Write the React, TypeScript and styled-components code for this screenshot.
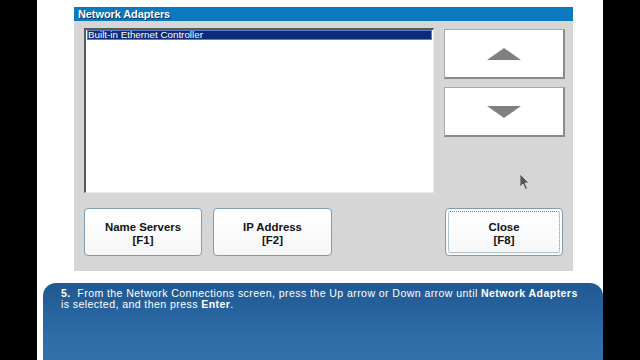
import styled, { createGlobalStyle } from 'styled-components';

const GlobalStyle = createGlobalStyle`
    html, body {
        margin: 0;
        padding: 0;
        background: #000;
        width: 640px;
        height: 360px;
        overflow: hidden;
        font-family: "Liberation Sans", Arial, sans-serif;
    }
`;

const Page = styled.div`
    position: relative;
    margin-left: 37px;
    width: 566px;
    height: 360px;
    background: #fff;
    display: flex;
    flex-direction: column;
`;

const Dialog = styled.div`
    margin: 7px 0 0 37px;
    width: 499px;
    height: 264px;
    background: #d6d6d6;
    display: flex;
    flex-direction: column;
`;

const TitleBar = styled.div`
    height: 14px;
    background: #0b78c0;
    color: #fff;
    font-weight: bold;
    font-size: 11px;
    line-height: 14px;
    padding-left: 4px;
    text-shadow: 1px 1px 0 #0a2a55;
    letter-spacing: -0.1px;
`;

const Body = styled.div`
    display: grid;
    grid-template-columns: 350px 121px;
    grid-template-rows: 165px 48px;
    column-gap: 10px;
    row-gap: 15px;
    padding: 7px 0 0 10px;
`;

const ListBox = styled.div`
    background: #fff;
    border-top: 2px solid #5a5a5a;
    border-left: 2px solid #5a5a5a;
    border-right: 1px solid #e8e8e8;
    border-bottom: 1px solid #e8e8e8;
    padding: 0 1px;
`;

const ListItem = styled.div<{ $selected?: boolean }>`
    height: 8px;
    font-size: 9.8px;
    line-height: 8px;
    padding-left: 0;
    background: ${({ $selected }) => ($selected ? '#0c2c7a' : 'transparent')};
    color: ${({ $selected }) => ($selected ? '#fff' : '#000')};
    border: 1px solid ${({ $selected }) => ($selected ? '#5a7fc0' : 'transparent')};
    white-space: nowrap;
`;

const ArrowColumn = styled.div`
    display: flex;
    flex-direction: column;
    gap: 8px;
    padding-top: 1px;
`;

const ArrowButton = styled.div`
    height: 50px;
    background: #fff;
    border: 1px solid #a8a8a8;
    border-right: 2px solid #8a8a8a;
    border-bottom: 2px solid #8a8a8a;
    box-sizing: border-box;
    display: flex;
    align-items: center;
    justify-content: center;
`;

const Triangle = styled.div<{ $down?: boolean }>`
    width: 0;
    height: 0;
    border-left: 17px solid transparent;
    border-right: 17px solid transparent;
    ${({ $down }) => ($down ? 'border-top: 12px solid #808080;' : 'border-bottom: 12px solid #808080;')}
`;

const ButtonRow = styled.div`
    display: flex;
    gap: 11px;
`;

const KeyButton = styled.div<{ $focused?: boolean; $width: number }>`
    position: relative;
    width: ${({ $width }) => $width}px;
    height: 48px;
    box-sizing: border-box;
    padding-top: 3px;
    background: linear-gradient(#ffffff, #f6f7f8);
    border: 1px solid #7f9cb3;
    border-radius: 4px;
    display: flex;
    flex-direction: column;
    align-items: center;
    justify-content: center;
    font-weight: bold;
    font-size: 11.4px;
    line-height: 13px;
    color: #111;
    text-align: center;
    ${({ $focused }) =>
        $focused &&
        `
        &::after {
            content: '';
            position: absolute;
            inset: 2px;
            border: 1px dotted #6a8aa8;
            border-radius: 2px;
        }
    `}
`;

const CloseCell = styled.div`
    padding-left: 1px;
`;

const Instructions = styled.div`
    margin: 12px 0 0 6px;
    flex: 1;
    border-radius: 13px 13px 0 0;
    background: linear-gradient(#1f5892, #2f6da8 70%, #3270aa);
    color: #fff;
    font-size: 10.6px;
    line-height: 11px;
    padding: 5px 10px 0 18px;
    letter-spacing: 0.4px;

    b {
        font-weight: bold;
    }
`;

const Cursor = styled.svg`
    position: absolute;
    left: 482px;
    top: 173px;
`;

const App = () => (
    <>
        <GlobalStyle />
        <Page>
            <Dialog>
                <TitleBar>Network Adapters</TitleBar>
                <Body>
                    <ListBox>
                        <ListItem $selected>Built-in Ethernet Controller</ListItem>
                    </ListBox>
                    <ArrowColumn>
                        <ArrowButton>
                            <Triangle />
                        </ArrowButton>
                        <ArrowButton>
                            <Triangle $down />
                        </ArrowButton>
                    </ArrowColumn>
                    <ButtonRow>
                        <KeyButton $width={118}>
                            <span>Name Servers</span>
                            <span>[F1]</span>
                        </KeyButton>
                        <KeyButton $width={119}>
                            <span>IP Address</span>
                            <span>[F2]</span>
                        </KeyButton>
                    </ButtonRow>
                    <CloseCell>
                        <KeyButton $width={118} $focused>
                            <span>Close</span>
                            <span>[F8]</span>
                        </KeyButton>
                    </CloseCell>
                </Body>
            </Dialog>
            <Instructions>
                <b>5.</b>&nbsp; From the Network Connections screen, press the Up arrow or Down arrow until{' '}
                <b>Network Adapters</b>
                <br />
                is selected, and then press <b>Enter</b>.
            </Instructions>
            <Cursor width="14" height="18" viewBox="0 0 14 18">
                <path d="M1 1 L1 14 L4 11 L6.5 16.5 L8.5 15.5 L6 10 L10 10 Z" fill="#555" stroke="#ddd" strokeWidth="0.8" />
            </Cursor>
        </Page>
    </>
);

export default App;
